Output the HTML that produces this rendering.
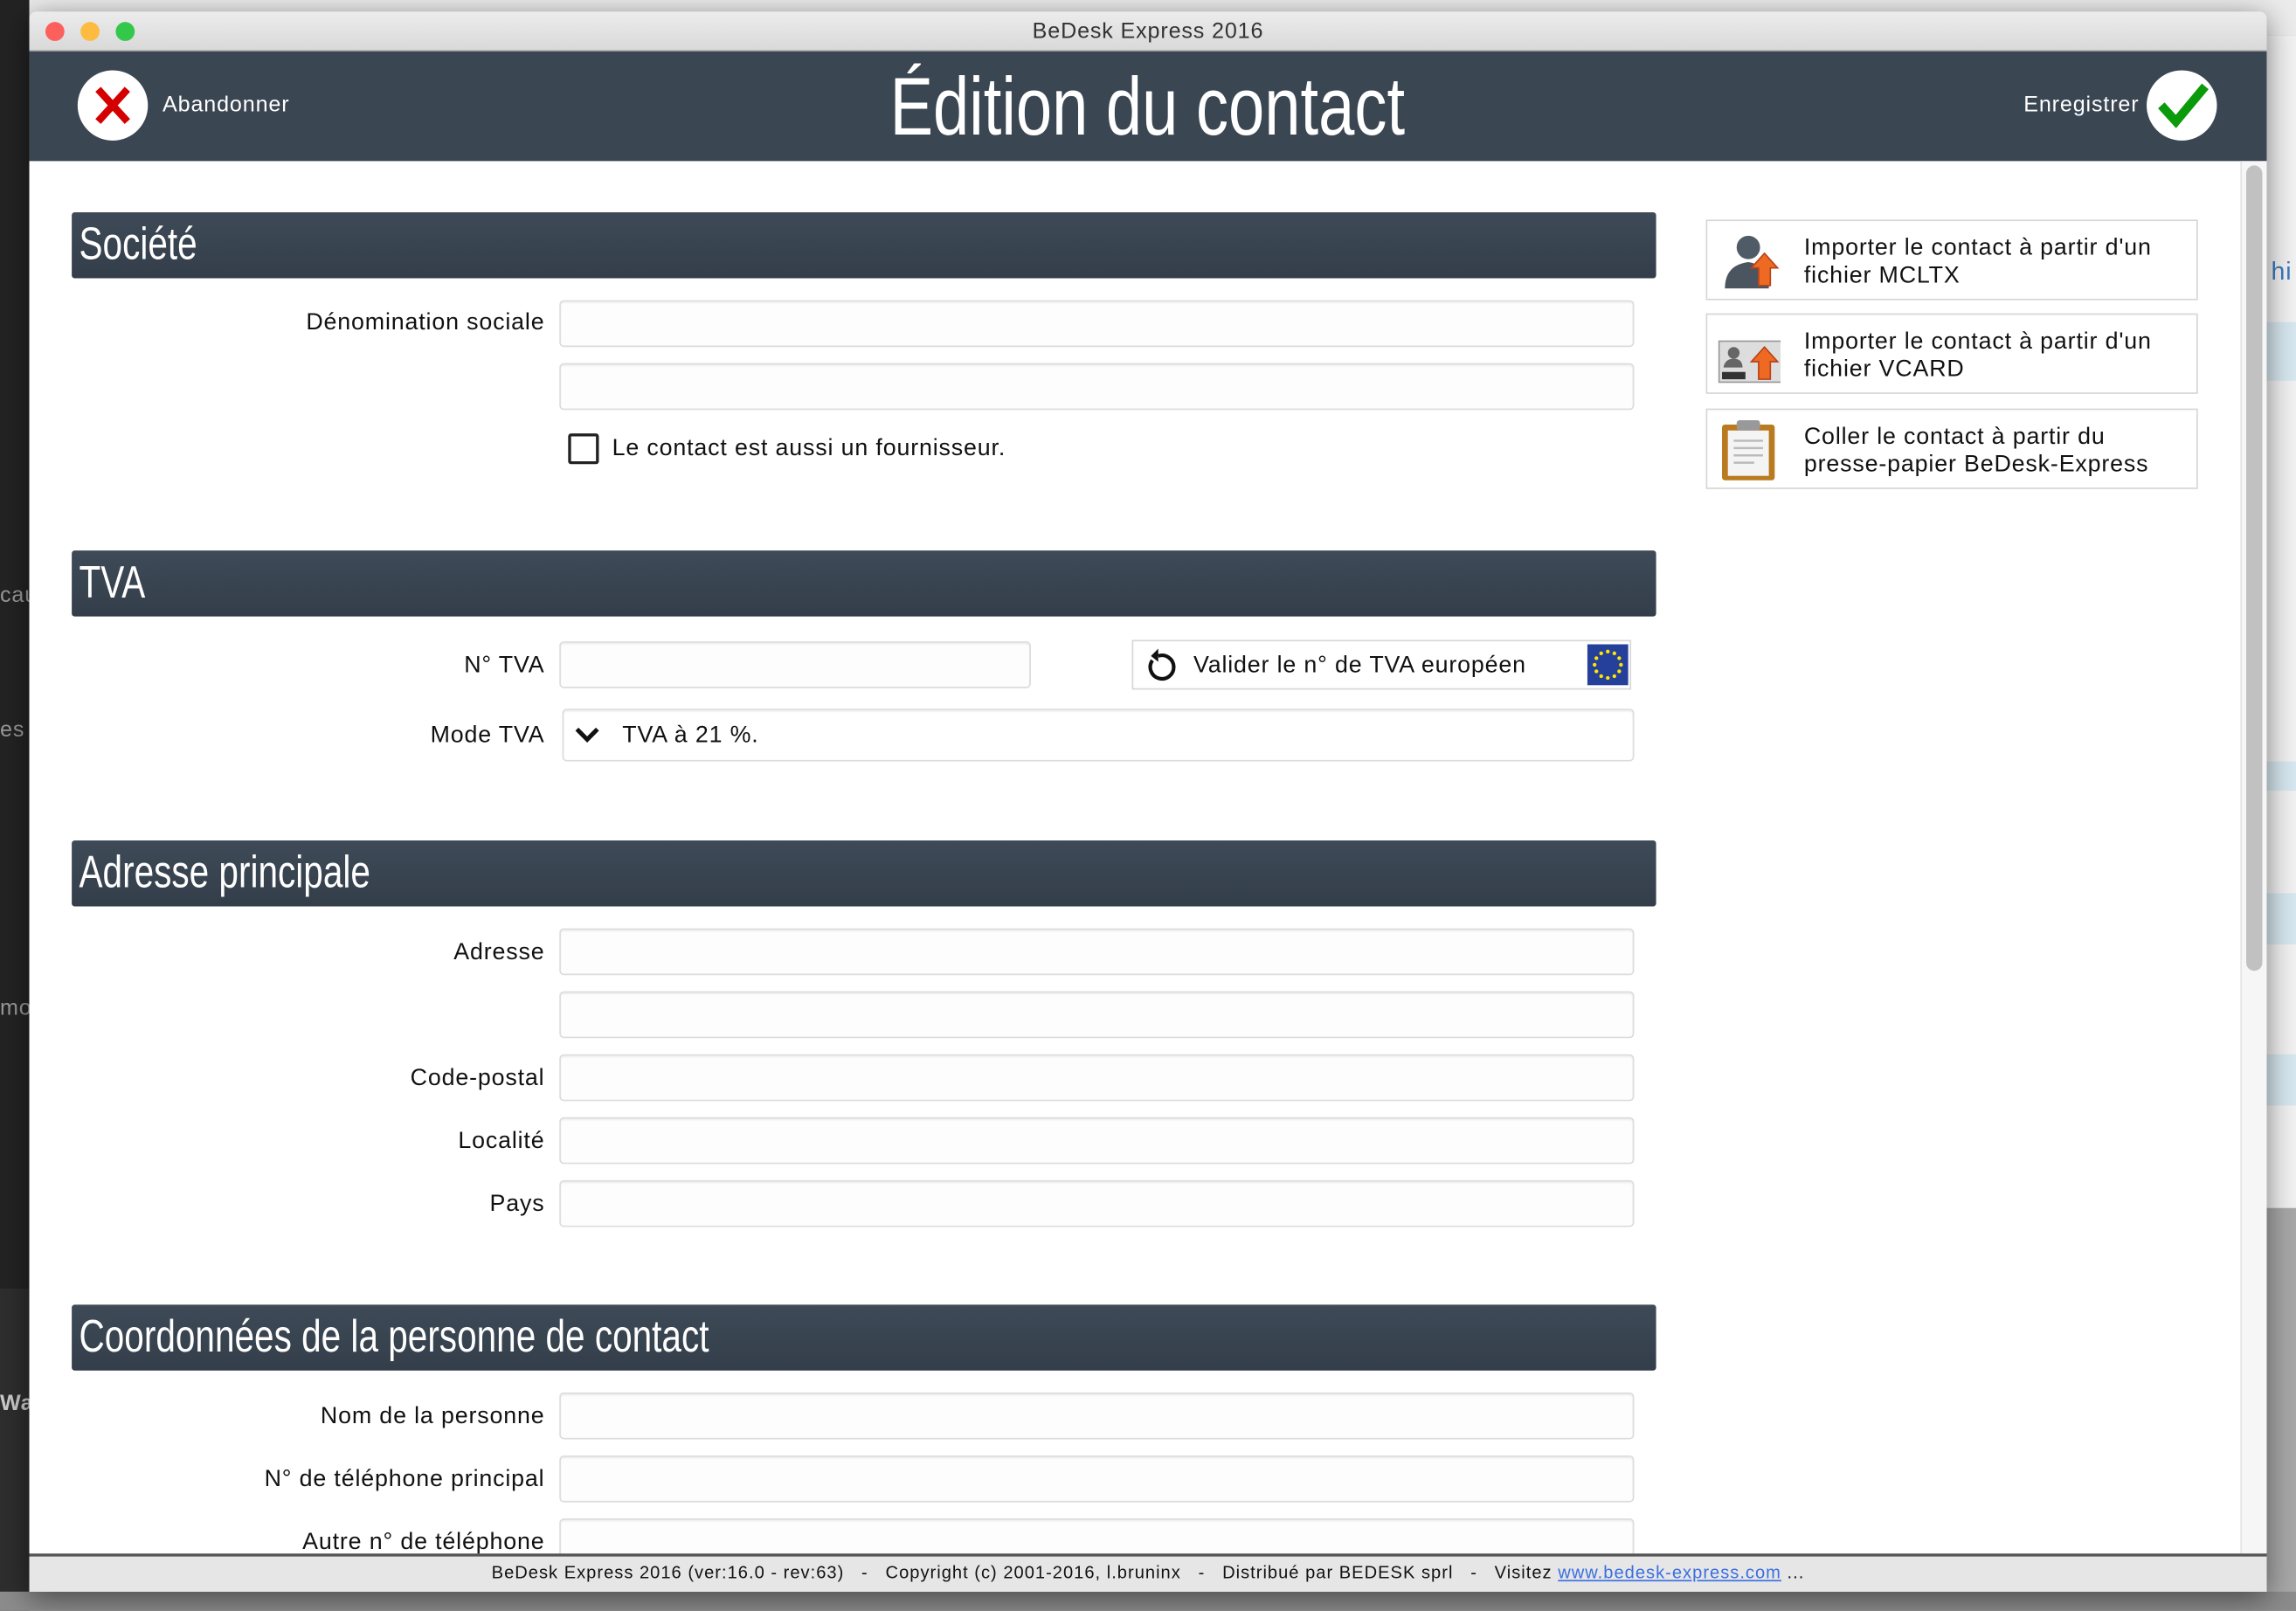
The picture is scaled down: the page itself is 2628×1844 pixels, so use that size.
<!DOCTYPE html>
<html><head><meta charset="utf-8">
<style>
*{margin:0;padding:0;box-sizing:border-box}
html,body{width:2628px;height:1844px;overflow:hidden;background:#8a8a8a}
#s{position:absolute;left:0;top:0;width:1568px;height:1100px;transform:scale(1.67602);transform-origin:0 0;font-family:"Liberation Sans","DejaVu Sans",sans-serif;overflow:hidden;background:#9a9a9a;letter-spacing:0.5px}
.a{position:absolute}
.lbl{position:absolute;right:1196px;font-size:16px;color:#111;white-space:nowrap;transform:translateY(-50%)}
.inp{position:absolute;left:382px;width:734px;height:32px;border:1px solid #dcdcdc;border-radius:3px;background:#fdfdfd;box-shadow:inset 0 1px 1px #eee}
.sec{position:absolute;left:49px;width:1082px;height:45px;background:linear-gradient(#3e4a57,#333e4a);border-radius:2px}
.sec span{position:absolute;left:5px;top:4px;color:#fff;font-size:31px;transform:scaleX(.78);transform-origin:0 0;white-space:nowrap;letter-spacing:0}
.btn{position:absolute;left:1165px;width:336px;height:55px;border:1px solid #d6d6d6;background:#fff}
.btn div{position:absolute;left:66px;top:9px;font-size:16px;line-height:19px;color:#111;white-space:nowrap}
.btn svg{position:absolute;left:6px;top:6px}
</style></head><body><div id="s">
<div class="a" style="left:0;top:0;width:1568px;height:24px;background:#ececec"></div>
<div class="a" style="left:0;top:0;width:20px;height:1100px;background:#232323"></div>
<div class="a" style="left:0;top:880px;width:20px;height:220px;background:#2e2e2e"></div>
<div class="a" style="left:1548px;top:24px;width:20px;height:1076px;background:#f2f2f2"></div>
<div class="a" style="left:1548px;top:220px;width:20px;height:40px;background:#d8e8f0"></div>
<div class="a" style="left:1548px;top:520px;width:20px;height:20px;background:#d8e8f0"></div>
<div class="a" style="left:1548px;top:610px;width:20px;height:35px;background:#d8e8f0"></div>
<div class="a" style="left:1548px;top:720px;width:20px;height:35px;background:#d8e8f0"></div>
<div class="a" style="left:1548px;top:825px;width:20px;height:275px;background:#a8a8a8"></div>
<div class="a" style="left:0;top:1087px;width:1568px;height:13px;background:#8c8c8c"></div>
<div class="a" style="left:1551px;top:176px;font-size:17px;color:#3a7abf">hi</div>
<div class="a" style="left:0;top:398px;font-size:15px;color:#999">cau</div>
<div class="a" style="left:0;top:490px;font-size:15px;color:#999">es</div>
<div class="a" style="left:0;top:680px;font-size:15px;color:#999">mo</div>
<div class="a" style="left:0;top:950px;font-size:15px;color:#ccc;font-weight:bold">Wa</div>
<div class="a" style="left:20px;top:8px;width:1528px;height:1079px;background:#fff;box-shadow:0 4px 20px rgba(0,0,0,.5);border-radius:5px 5px 0 0;overflow:hidden">
 <div class="a" style="left:0;top:0;width:1528px;height:27px;background:linear-gradient(#ececec,#d9d9d9);border-bottom:1px solid #b5b5b5"></div>
 <div class="a" style="left:11px;top:7px;width:13px;height:13px;border-radius:50%;background:#fc605c"></div>
 <div class="a" style="left:35px;top:7px;width:13px;height:13px;border-radius:50%;background:#fdbc40"></div>
 <div class="a" style="left:59px;top:7px;width:13px;height:13px;border-radius:50%;background:#34c84a"></div>
 <div class="a" style="left:0;top:5px;width:1528px;text-align:center;font-size:15px;color:#333">BeDesk Express 2016</div>
 <div class="a" style="left:0;top:27px;width:1528px;height:75px;background:#3b4653"></div>
</div>
<div class="a" style="left:53px;top:48px;width:48px;height:48px;border-radius:50%;background:#fff"></div>
<svg class="a" style="left:63px;top:58px" width="28" height="28" viewBox="0 0 28 28"><path d="M4 3L24 25M24 3L4 25" stroke="#d40000" stroke-width="5"/></svg>
<div class="a" style="left:111px;top:63px;font-size:15px;color:#fff">Abandonner</div>
<div class="a" style="left:0;top:40px;width:1568px;text-align:center;letter-spacing:0"><span style="display:inline-block;font-size:56px;color:#fff;transform:scaleX(.79)">Édition du contact</span></div>
<div class="a" style="left:1382px;top:63px;font-size:15px;color:#fff">Enregistrer</div>
<div class="a" style="left:1466px;top:48px;width:48px;height:48px;border-radius:50%;background:#fff"></div>
<svg class="a" style="left:1472px;top:54px" width="38" height="36" viewBox="0 0 38 36"><path d="M4 18L14 29L34 5" stroke="#0a9a0a" stroke-width="6" fill="none"/></svg>
<div class="a" style="left:1530px;top:110px;width:18px;height:951px;background:#f6f6f6;border-left:1px solid #e4e4e4"></div>
<div class="a" style="left:1534px;top:113px;width:11px;height:550px;background:#c1c1c1;border-radius:6px"></div>
<div class="sec" style="top:145px"><span>Société</span></div>
<div class="lbl" style="top:221px">Dénomination sociale</div>
<div class="inp" style="top:205px"></div>
<div class="inp" style="top:248px"></div>
<div class="a" style="left:388px;top:296px;width:21px;height:21px;border:2px solid #222;border-radius:2px"></div>
<div class="a" style="left:418px;top:298px;font-size:16px;color:#111">Le contact est aussi un fournisseur.</div>
<div class="sec" style="top:376px"><span>TVA</span></div>
<div class="lbl" style="top:455px">N° TVA</div>
<div class="inp" style="top:438px;width:322px"></div>
<div class="a" style="left:773px;top:437px;width:341px;height:34px;border:1px solid #d6d6d6;background:#fff"></div>
<svg class="a" style="left:780px;top:442px" width="24" height="24" viewBox="0 0 24 24"><path d="M7 9A8 8 0 1 0 11 6" stroke="#111" stroke-width="2.5" fill="none"/><path d="M11 1L6 6L11 10Z" fill="#111"/></svg>
<div class="a" style="left:815px;top:446px;font-size:16px;color:#111">Valider le n° de TVA européen</div>
<svg class="a" style="left:1084px;top:440px" width="28" height="28" viewBox="0 0 28 28"><rect width="28" height="28" fill="#24409a"/><g fill="#ffe600"><circle cx="14" cy="5" r="1.3"/><circle cx="18.5" cy="6.2" r="1.3"/><circle cx="21.8" cy="9.5" r="1.3"/><circle cx="23" cy="14" r="1.3"/><circle cx="21.8" cy="18.5" r="1.3"/><circle cx="18.5" cy="21.8" r="1.3"/><circle cx="14" cy="23" r="1.3"/><circle cx="9.5" cy="21.8" r="1.3"/><circle cx="6.2" cy="18.5" r="1.3"/><circle cx="5" cy="14" r="1.3"/><circle cx="6.2" cy="9.5" r="1.3"/><circle cx="9.5" cy="6.2" r="1.3"/></g></svg>
<div class="lbl" style="top:503px">Mode TVA</div>
<div class="inp" style="top:484px;left:384px;width:732px;height:36px;background:#fff"></div>
<svg class="a" style="left:392px;top:495px" width="18" height="14" viewBox="0 0 18 14"><path d="M2 3L9 10L16 3" stroke="#111" stroke-width="3" fill="none"/></svg>
<div class="a" style="left:425px;top:494px;font-size:16px;color:#111">TVA à 21 %.</div>
<div class="sec" style="top:574px"><span>Adresse principale</span></div>
<div class="lbl" style="top:651px">Adresse</div>
<div class="inp" style="top:634px"></div>
<div class="inp" style="top:677px"></div>
<div class="lbl" style="top:737px">Code-postal</div>
<div class="inp" style="top:720px"></div>
<div class="lbl" style="top:780px">Localité</div>
<div class="inp" style="top:763px"></div>
<div class="lbl" style="top:823px">Pays</div>
<div class="inp" style="top:806px"></div>
<div class="sec" style="top:891px"><span>Coordonnées de la personne de contact</span></div>
<div class="lbl" style="top:968px">Nom de la personne</div>
<div class="inp" style="top:951px"></div>
<div class="lbl" style="top:1011px">N° de téléphone principal</div>
<div class="inp" style="top:994px"></div>
<div class="lbl" style="top:1054px">Autre n° de téléphone</div>
<div class="inp" style="top:1037px"></div>
<div class="btn" style="top:150px"><svg width="44" height="44" viewBox="0 0 44 44"><circle cx="22" cy="12" r="8" fill="#4f5b66"/><path d="M6 40Q6 24 22 22Q36 24 36 40Z" fill="#4a5560"/><path d="M33 16L42 26H37V38H29V26H24Z" fill="#ee6a22" stroke="#b8431a"/></svg><div>Importer le contact à partir d'un<br>fichier MCLTX</div></div>
<div class="btn" style="top:214px"><svg width="44" height="44" viewBox="0 0 44 44"><rect x="2" y="12" width="44" height="28" fill="#ddd" stroke="#999"/><circle cx="12" cy="20" r="4" fill="#666"/><path d="M5 30Q6 24 12 24Q18 24 18 30Z" fill="#666"/><path d="M4 33h16v5H4z" fill="#333"/><path d="M33 16L42 26H37V38H29V26H24Z" fill="#ee6a22" stroke="#b8431a"/></svg><div>Importer le contact à partir d'un<br>fichier VCARD</div></div>
<div class="btn" style="top:279px"><svg width="44" height="44" viewBox="0 0 44 44"><rect x="4" y="4" width="36" height="38" fill="#b97a20" rx="2"/><rect x="8" y="8" width="28" height="31" fill="#f4f4f4"/><rect x="14" y="1" width="16" height="7" fill="#999" rx="2"/><path d="M12 15h20M12 20h20M12 25h20M12 30h14" stroke="#bbb" stroke-width="1.5"/></svg><div>Coller le contact à partir du<br>presse-papier BeDesk-Express</div></div>
<div class="a" style="left:20px;top:1061px;width:1528px;height:26px;background:#e6e6e6;border-top:2px solid #555"></div>
<div class="a" style="left:0;top:1067px;width:1568px;text-align:center;font-size:12px;color:#111;white-space:pre;letter-spacing:0.6px">BeDesk Express 2016 (ver:16.0 - rev:63)   -   Copyright (c) 2001-2016, l.bruninx   -   Distribué par BEDESK sprl   -   Visitez <span style="color:#3a6fe0;text-decoration:underline">www.bedesk-express.com</span> ...</div>
</div></body></html>
